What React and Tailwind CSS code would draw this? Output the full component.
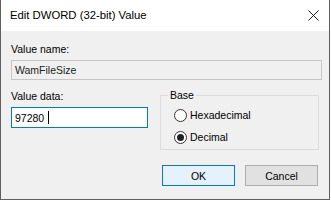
export default function App() {
  return (
    <div className="w-[331px] h-[201px] bg-white" style={{ fontFamily: '"Liberation Sans", Arial, sans-serif' }}>
      <div className="w-[330px] h-[200px] border-l border-r border-b border-[#5f5f5f] bg-[#f0f0f0] flex flex-col text-black">
        <div className="h-[31px] bg-white flex items-center justify-between pl-[9px] pr-[10px]">
          <span className="text-[11.3px] leading-none">Edit DWORD (32-bit) Value</span>
          <svg width="11" height="11" viewBox="0 0 11 11" className="text-[#1a1a1a]">
            <path d="M0.5 0.5 L10.5 10.5 M10.5 0.5 L0.5 10.5" stroke="currentColor" strokeWidth="1" />
          </svg>
        </div>
        <div className="flex-1 px-[10px] pt-[11px] text-[10.5px] leading-[14px]">
          <div>Value name:</div>
          <div className="mt-[4px] h-[20px] w-[311px] border border-[#c6c6c6] bg-[#f0f0f0] pl-[3px] flex items-center text-[#222]">
            WamFileSize
          </div>
          <div className="flex">
            <div className="w-[138px] pt-[9px]">
              <div>Value data:</div>
              <div className="mt-[4px] h-[21px] border border-[#0078d7] bg-white pl-[3px] flex items-center">
                <span>97280</span>
                <span className="ml-[4px] w-px h-[13px] bg-black" />
              </div>
            </div>
            <fieldset className="ml-[12px] mt-[8px] w-[160px] h-[62px] border border-[#dcdcdc] px-[13px]">
              <legend className="ml-[-6px] px-[2px]">Base</legend>
              <label className="flex items-center gap-[3px] mt-[6px]">
                <span className="w-[13px] h-[13px] rounded-full border border-[#333] bg-white" />
                <span>Hexadecimal</span>
              </label>
              <label className="flex items-center gap-[3px] mt-[8px]">
                <span className="w-[13px] h-[13px] rounded-full border border-[#333] bg-white flex items-center justify-center">
                  <span className="w-[7px] h-[7px] rounded-full bg-[#222]" />
                </span>
                <span>Decimal</span>
              </label>
            </fieldset>
          </div>
          <div className="flex justify-end gap-[10px] mt-[15px] pr-[1px]">
            <div className="w-[73px] h-[21px] border border-[#0078d7] bg-[#e5f1fb] flex items-center justify-center">OK</div>
            <div className="w-[73px] h-[21px] border border-[#adadad] bg-[#e1e1e1] flex items-center justify-center">Cancel</div>
          </div>
        </div>
      </div>
    </div>
  );
}
